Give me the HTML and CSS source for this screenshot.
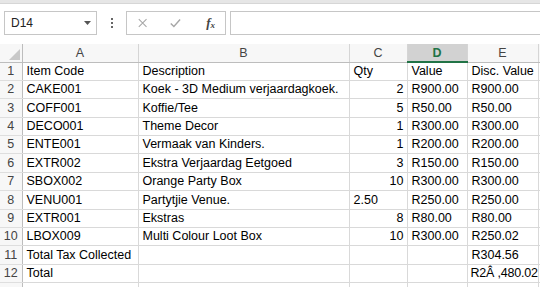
FILE: index.html
```html
<!DOCTYPE html>
<html lang="en">
<head>
    <meta charset="UTF-8">
    <meta name="viewport" content="width=device-width, initial-scale=1.0">
    <title>Invoice lines</title>
    <link rel="stylesheet" href="styles.css">
</head>
<body>
    <div class="top-strip"></div>

    <div class="formula-row">
        <div class="name-box">
            <span>D14</span>
            <svg class="drop" width="7" height="4" viewBox="0 0 7 4"><path d="M0 0H7L3.5 4Z" fill="#555"/></svg>
        </div>
        <div class="grip"><i></i><i></i><i></i></div>
        <div class="fx-buttons">
            <svg width="12" height="12" viewBox="0 0 12 12"><path d="M1 1L11 11M11 1L1 11" stroke="#a6a6a6" stroke-width="1.3" fill="none"/></svg>
            <svg width="14" height="12" viewBox="0 0 14 12"><path d="M1 6.5L5 10.5L13 1.5" stroke="#a6a6a6" stroke-width="1.8" fill="none"/></svg>
            <span class="fx">f<sub>x</sub></span>
        </div>
        <div class="formula-input"></div>
    </div>

    <table class="sheet">
        <colgroup>
            <col class="c-row"><col class="c-a"><col class="c-b"><col class="c-c"><col class="c-d"><col class="c-e"><col class="c-f">
        </colgroup>
        <thead>
            <tr>
                <th class="corner"><span class="tri"></span></th>
                <th>A</th><th>B</th><th>C</th><th class="selected">D</th><th>E</th><th></th>
            </tr>
        </thead>
        <tbody>
            <tr><th>1</th><td>Item Code</td><td>Description</td><td>Qty</td><td>Value</td><td>Disc. Value</td><td></td></tr>
            <tr><th>2</th><td>CAKE001</td><td>Koek - 3D Medium verjaardagkoek.</td><td class="num">2</td><td>R900.00</td><td>R900.00</td><td></td></tr>
            <tr><th>3</th><td>COFF001</td><td>Koffie/Tee</td><td class="num">5</td><td>R50.00</td><td>R50.00</td><td></td></tr>
            <tr><th>4</th><td>DECO001</td><td>Theme Decor</td><td class="num">1</td><td>R300.00</td><td>R300.00</td><td></td></tr>
            <tr><th>5</th><td>ENTE001</td><td>Vermaak van Kinders.</td><td class="num">1</td><td>R200.00</td><td>R200.00</td><td></td></tr>
            <tr><th>6</th><td>EXTR002</td><td>Ekstra Verjaardag Eetgoed</td><td class="num">3</td><td>R150.00</td><td>R150.00</td><td></td></tr>
            <tr><th>7</th><td>SBOX002</td><td>Orange Party Box</td><td class="num">10</td><td>R300.00</td><td>R300.00</td><td></td></tr>
            <tr><th>8</th><td>VENU001</td><td>Partytjie Venue.</td><td>2.50</td><td>R250.00</td><td>R250.00</td><td></td></tr>
            <tr><th>9</th><td>EXTR001</td><td>Ekstras</td><td class="num">8</td><td>R80.00</td><td>R80.00</td><td></td></tr>
            <tr><th>10</th><td>LBOX009</td><td>Multi Colour Loot Box</td><td class="num">10</td><td>R300.00</td><td>R250.02</td><td></td></tr>
            <tr><th>11</th><td>Total Tax Collected</td><td></td><td></td><td></td><td>R304.56</td><td></td></tr>
            <tr><th>12</th><td>Total</td><td></td><td></td><td></td><td class="spill">R2Â ,480.02</td><td></td></tr>
            <tr><th></th><td></td><td></td><td></td><td></td><td></td><td></td></tr>
        </tbody>
    </table>
</body>
</html>
```

FILE: styles.css
```css
body {
    margin: 0;
    width: 540px;
    height: 287px;
    overflow: hidden;
    background-color: #ffffff;
    font-family: "Liberation Sans", Arial, sans-serif;
    color: #000000;
}

.top-strip {
    height: 3px;
    background-color: #e6e6e6;
    border-bottom: 1px solid #d6d6d6;
}

/* formula bar */
.formula-row {
    display: flex;
    align-items: center;
    height: 24px;
    margin-top: 7px;
    padding-left: 4px;
}

.name-box {
    box-sizing: border-box;
    width: 93px;
    height: 24px;
    border: 1px solid #c6c6c6;
    display: flex;
    align-items: center;
    justify-content: space-between;
    padding: 0 5px 0 6px;
    font-size: 12px;
    color: #222;
}

.grip {
    width: 29px;
    display: flex;
    flex-direction: column;
    align-items: center;
    gap: 2px;
}

.grip i {
    width: 2px;
    height: 2px;
    background-color: #666;
}

.fx-buttons {
    box-sizing: border-box;
    width: 100px;
    height: 24px;
    border: 1px solid #c6c6c6;
    display: flex;
    align-items: center;
    padding: 0 10px 0 11px;
    gap: 23px;
}

.fx {
    font-family: "Liberation Serif", serif;
    font-style: italic;
    font-weight: bold;
    font-size: 13px;
    color: #444;
    margin-left: 2px;
}

.fx sub {
    font-size: 9px;
    vertical-align: -1px;
}

.formula-input {
    flex: 1;
    height: 24px;
    box-sizing: border-box;
    border: 1px solid #c6c6c6;
    border-right: none;
    margin-left: 4px;
}

/* grid */
.sheet {
    margin-top: 9px;
    border-collapse: collapse;
    table-layout: fixed;
    width: 578px;
    font-size: 12.5px;
}

.c-row { width: 22px; }
.c-a { width: 116px; }
.c-b { width: 211px; }
.c-c { width: 58px; }
.c-d { width: 60px; }
.c-e { width: 71px; }
.c-f { width: 40px; }

.sheet thead tr {
    height: 18px;
}

.sheet tbody tr {
    height: 18.4px;
}

.sheet th,
.sheet td {
    padding: 0;
    white-space: nowrap;
    overflow: hidden;
    line-height: 14px;
    vertical-align: bottom;
}

.sheet thead th {
    background-color: #f7f7f7;
    color: #444;
    font-weight: normal;
    text-align: center;
    vertical-align: middle;
    border-right: 1px solid #d5d5d5;
    border-bottom: 1px solid #bdbdbd;
}

.sheet thead th.selected {
    background-color: #d2d2d2;
    color: #217346;
    font-weight: bold;
    border-bottom: 2px solid #217346;
}

.sheet th.corner {
    position: relative;
    border-right: 1px solid #bdbdbd;
}

.tri {
    position: absolute;
    right: 2px;
    bottom: 2px;
    width: 0;
    height: 0;
    border-left: 11px solid transparent;
    border-bottom: 11px solid #c8c8c8;
}

.sheet tbody th {
    background-color: #f7f7f7;
    color: #444;
    font-weight: normal;
    text-align: center;
    border-right: 1px solid #bdbdbd;
    border-bottom: 1px solid #dedede;
    padding-bottom: 2px;
}

.sheet td {
    border-right: 1px solid #d9d9d9;
    border-bottom: 1px solid #d9d9d9;
    padding: 0 3px 2px 4px;
}

.sheet td.num {
    text-align: right;
    padding-right: 3px;
}

.sheet td.spill {
    padding-left: 3px;
    letter-spacing: -0.2px;
}
```
